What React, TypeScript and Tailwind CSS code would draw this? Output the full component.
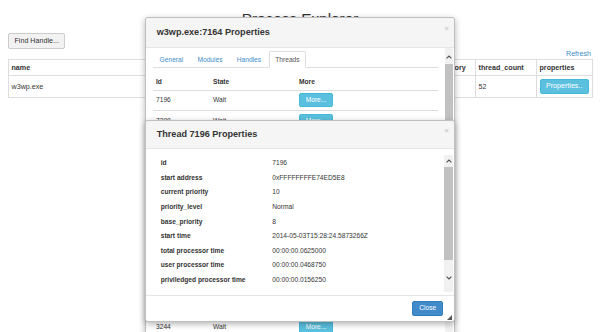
import React from "react";

interface ThreadRow {
  id: string;
  state: string;
  covered?: boolean;
}

// rows 3..11 sit fully under the thread dialog
const threads: ThreadRow[] = [
  { id: "7196", state: "Wait" },
  { id: "7208", state: "Wait" },
  { id: "7212", state: "Wait", covered: true },
  { id: "7220", state: "Wait", covered: true },
  { id: "7224", state: "Wait", covered: true },
  { id: "7236", state: "Wait", covered: true },
  { id: "7240", state: "Wait", covered: true },
  { id: "6984", state: "Wait", covered: true },
  { id: "6672", state: "Wait", covered: true },
  { id: "5408", state: "Wait", covered: true },
  { id: "4120", state: "Wait", covered: true },
  { id: "3244", state: "Wait" },
  { id: "2916", state: "Wait" },
];

const threadProps: [string, string][] = [
  ["id", "7196"],
  ["start address", "0xFFFFFFFFE74ED5E8"],
  ["current priority", "10"],
  ["priority_level", "Normal"],
  ["base_priority", "8"],
  ["start time", "2014-05-03T15:28:24.5873266Z"],
  ["total processor time", "00:00:00.0625000"],
  ["user processor time", "00:00:00.0468750"],
  ["priviledged processor time", "00:00:00.0156250"],
];

const Chevron = ({ up }: { up?: boolean }) => (
  <svg width="6" height="4" viewBox="0 0 6 4" className="block">
    <polyline
      points={up ? "0.6,3.4 3,1 5.4,3.4" : "0.6,0.6 3,3 5.4,0.6"}
      fill="none"
      stroke="#505050"
      strokeWidth="1.1"
    />
  </svg>
);

const App: React.FC = () => {
  return (
    <div className="relative w-[600px] h-[332px] overflow-hidden bg-white text-[#333] font-['Liberation_Sans',Arial,sans-serif]">
      {/* page */}
      <div className="px-[8px]">
        <h2 className="pt-[10px] text-center text-[15.3px] leading-[17px] font-medium">
          Process Explorer
        </h2>
        <button className="mt-[6.3px] h-[15.7px] px-[5.5px] flex items-center text-[7.15px] leading-none bg-[#f2f2f2] border border-[#ccc] rounded-[2px] text-[#333]">
          Find Handle...
        </button>
        <div className="h-[10.3px] text-right text-[7.15px] leading-[10.3px] pr-[1px]">
          <a className="text-[#428bca]">Refresh</a>
        </div>
        <table className="w-full table-fixed border-collapse text-[7.15px] leading-[10.2px]">
          <colgroup>
            <col className="w-[242px]" />
            <col className="w-[80px]" />
            <col className="w-[77px]" />
            <col className="w-[68px]" />
            <col className="w-[61px]" />
            <col className="w-[56px]" />
          </colgroup>
          <thead>
            <tr className="h-[16px]">
              {["name", "", "", "private_memory", "thread_count", "properties"].map((h, i) => (
                <th
                  key={i}
                  className="border border-[#ddd] px-[2.5px] py-[2.5px] text-left font-bold whitespace-nowrap"
                >
                  {h}
                </th>
              ))}
            </tr>
          </thead>
          <tbody>
            <tr className="h-[21.4px]">
              <td className="border border-[#ddd] px-[2.5px] py-[2.5px]">w3wp.exe</td>
              <td className="border border-[#ddd] px-[2.5px] py-[2.5px]"></td>
              <td className="border border-[#ddd] px-[2.5px] py-[2.5px]"></td>
              <td className="border border-[#ddd] px-[2.5px] py-[2.5px]"></td>
              <td className="border border-[#ddd] px-[2.5px] py-[2.5px]">52</td>
              <td className="border border-[#ddd] px-[2.5px] py-[2.5px]">
                <button className="h-[15px] w-[49.3px] flex items-center justify-center text-[7.15px] leading-none text-white bg-[#5bc0de] border border-[#46b8da] rounded-[2px]">
                  Properties..
                </button>
              </td>
            </tr>
          </tbody>
        </table>
      </div>

      {/* process properties dialog */}
      <div className="absolute left-[145px] top-[16.7px] w-[310px] h-[340px] flex flex-col bg-white border border-[rgba(0,0,0,0.25)] rounded-[3px] shadow-[0_2px_6px_rgba(0,0,0,0.3)] overflow-hidden">
        <div className="h-[30px] shrink-0 flex items-center justify-between pl-[10.7px] pr-[5px] bg-[#f5f5f5] border-b border-[#e5e5e5]">
          <span className="text-[9.1px] font-bold leading-none">w3wp.exe:7164 Properties</span>
          <span className="self-start mt-[7px] text-[8px] font-bold leading-none text-[#cfcfcf]">×</span>
        </div>
        <div className="flex flex-1 min-h-0">
          <div className="flex-1 pl-[7px] pr-[7.3px] pt-[3.7px] text-[6.65px]">
            <div className="flex h-[17px] border-b border-[#ddd]">
              {["General", "Modules", "Handles", "Threads"].map((t) => (
                <div
                  key={t}
                  className={
                    t === "Threads"
                      ? "h-[17px] px-[5.6px] mr-[1px] flex items-center border border-[#ddd] border-b-white bg-white rounded-t-[2px] text-[#555]"
                      : "h-[17px] px-[5.6px] mr-[1px] flex items-center border border-transparent text-[#428bca]"
                  }
                >
                  {t}
                </div>
              ))}
            </div>
            <div className="mt-[4px] h-[18.3px] pt-[2px] flex items-center border-b border-[#ddd] font-bold">
              <div className="w-[57px] pl-[3px]">Id</div>
              <div className="w-[86px] pl-[3px]">State</div>
              <div className="flex-1 pl-[3px]">More</div>
            </div>
            {threads.map((t) => (
              <div key={t.id} className="h-[20.6px] flex items-center border-b border-[#ddd]">
                {!t.covered && (
                  <>
                    <div className="w-[57px] pl-[3px]">{t.id}</div>
                    <div className="w-[86px] pl-[3px]">{t.state}</div>
                    <div className="flex-1 pl-[3px]">
                      <button className="h-[14px] w-[34px] flex items-center justify-center leading-none text-white bg-[#5bc0de] border border-[#46b8da] rounded-[2px]">
                        More...
                      </button>
                    </div>
                  </>
                )}
              </div>
            ))}
          </div>
          <div className="w-[8px] mr-[1px] flex flex-col bg-[#f1f1f1]">
            <div className="h-[16.5px] flex items-end justify-center pb-[5px]">
              <Chevron up />
            </div>
            <div className="h-[230px] bg-[#c1c1c1]" />
          </div>
        </div>
      </div>

      {/* thread properties dialog */}
      <div className="absolute left-[145px] top-[120px] w-[310px] flex flex-col bg-white border border-[rgba(0,0,0,0.25)] rounded-[3px] shadow-[0_2px_6px_rgba(0,0,0,0.3)]">
        <div className="h-[28px] flex items-center justify-between pl-[10.7px] pr-[5px] bg-[#f5f5f5] border-b border-[#e5e5e5] rounded-t-[3px]">
          <span className="text-[9.1px] font-bold leading-none">Thread 7196 Properties</span>
          <span className="self-start mt-[6px] text-[8px] font-bold leading-none text-[#cfcfcf]">×</span>
        </div>
        <div className="h-[146px] flex pt-[6px] pb-[3.3px]">
          <div className="flex-1 pl-[14.7px] pt-[1px] text-[6.65px]">
            {threadProps.map(([k, v]) => (
              <div key={k} className="h-[14.6px] flex items-center">
                <div className="w-[111.6px] font-bold">{k}</div>
                <div>{v}</div>
              </div>
            ))}
          </div>
          <div className="w-[8.4px] mr-[1.3px] flex flex-col bg-[#f1f1f1]">
            <div className="h-[11.7px] flex items-center justify-center">
              <Chevron up />
            </div>
            <div className="h-[93px] bg-[#c1c1c1]" />
            <div className="flex-1" />
            <div className="h-[11px] flex items-center justify-center">
              <Chevron />
            </div>
            <div className="h-[8.4px]" />
          </div>
        </div>
        <div className="relative h-[26.3px] flex items-center justify-end pr-[10.7px] border-t border-[#e5e5e5]">
          <button className="h-[15.7px] w-[31px] flex items-center justify-center text-[6.65px] leading-none text-white bg-[#428bca] border border-[#357ebd] rounded-[2px]">
            Close
          </button>
          <svg width="5" height="5" viewBox="0 0 5 5" className="absolute right-[2px] bottom-[1.5px]">
            <polygon points="5,0 5,5 0,5" fill="#555" />
          </svg>
        </div>
      </div>
    </div>
  );
};

export default App;
